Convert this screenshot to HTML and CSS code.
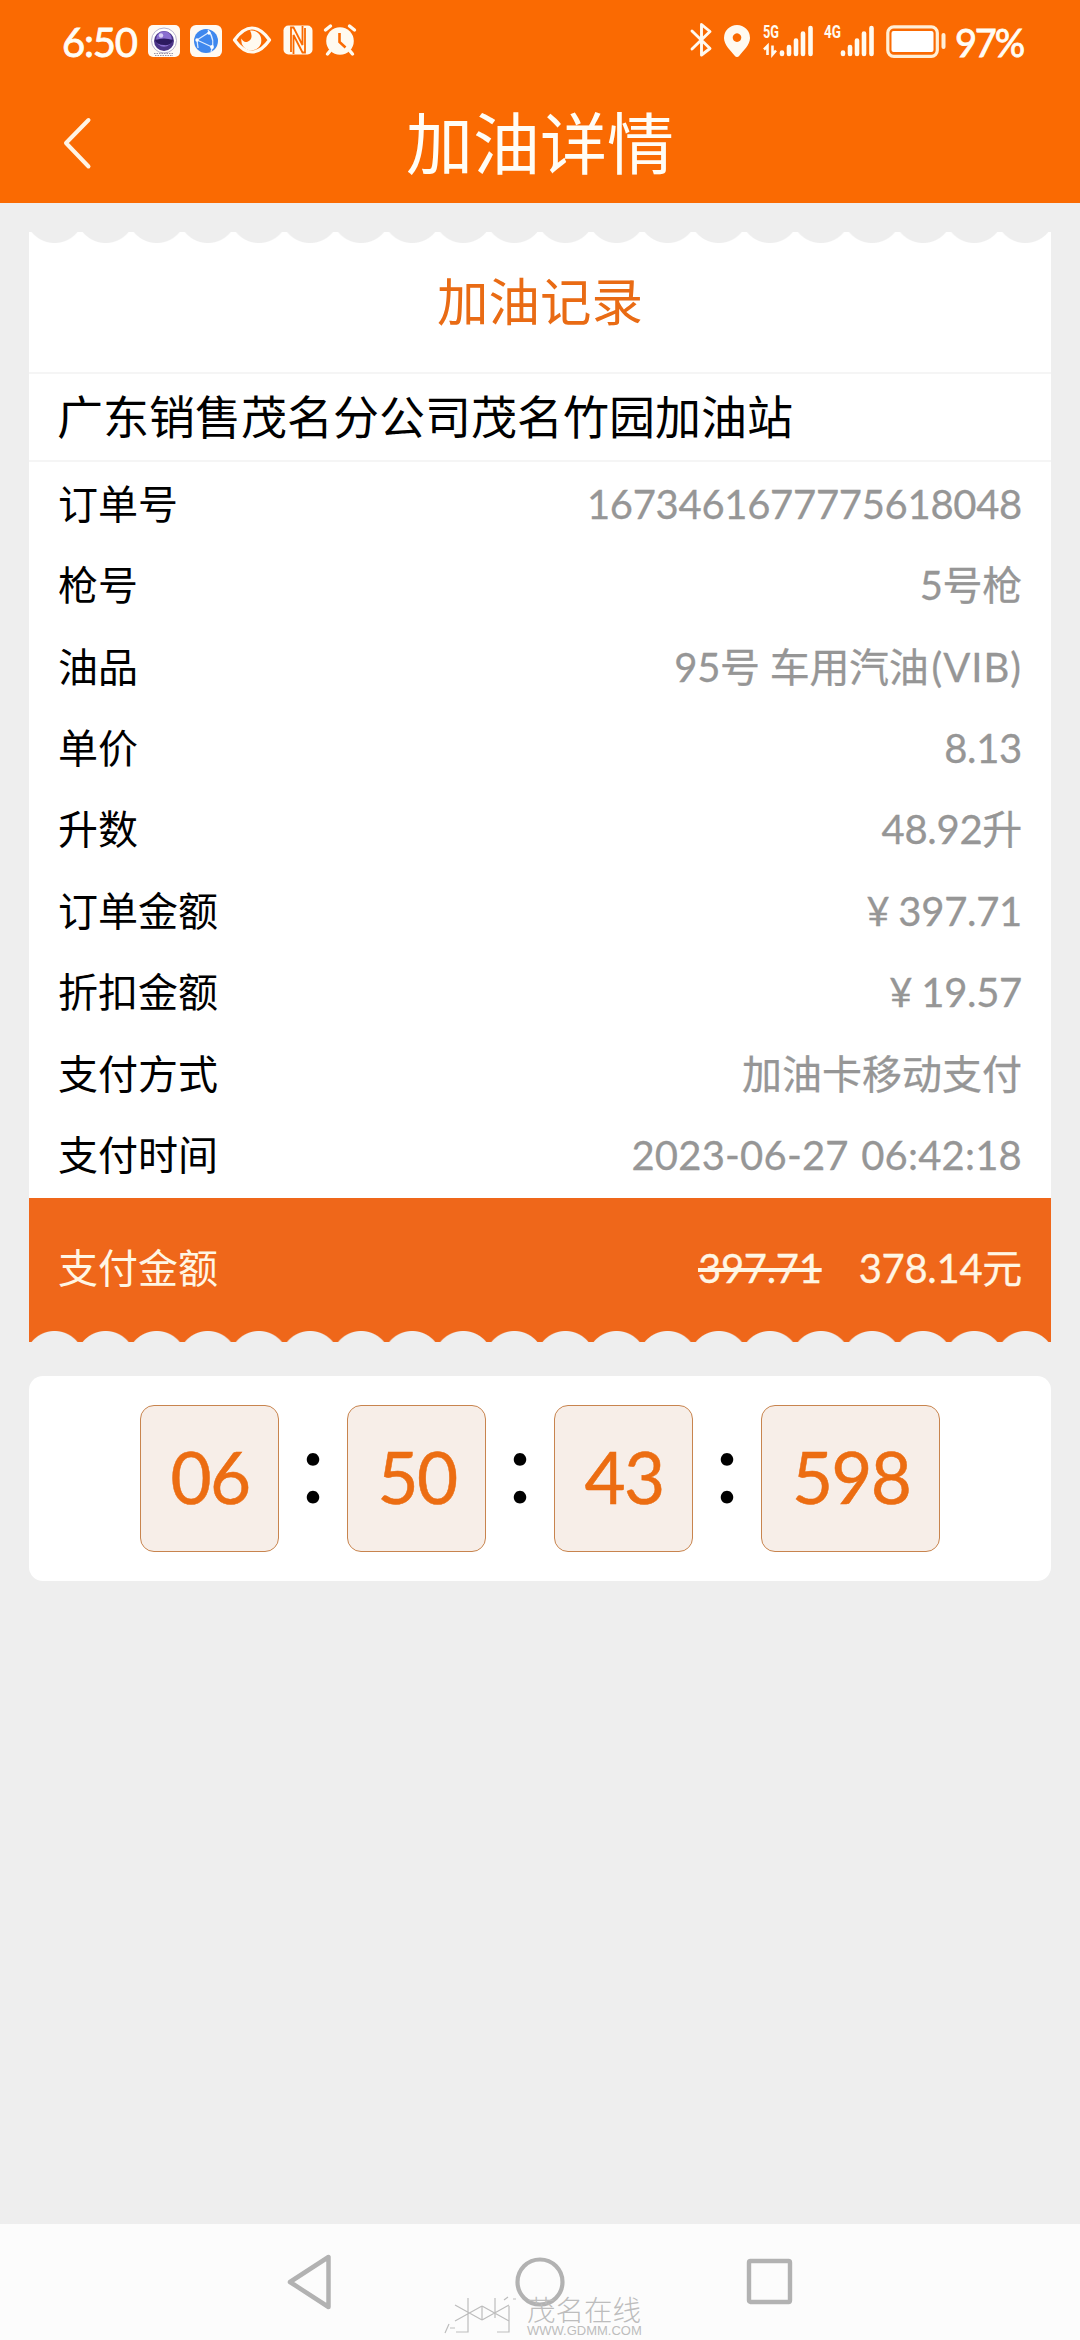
FILE: index.html
```
<!DOCTYPE html>
<html lang="zh-CN">
<head>
<meta charset="utf-8">
<title>加油详情</title>
<link rel="stylesheet" href="styles.css">
</head>
<body>
<header class="top">
  <div class="status">
    <div class="status-left">
      <span class="clock">6:50</span>
      <svg class="ic-cam" width="32" height="32" viewBox="0 0 32 32"><rect width="32" height="32" rx="5" fill="#fffaf4"/><circle cx="16" cy="15.500" r="12.500" fill="#fff" stroke="#b9b2cc"/><path d="M6 28.500h20M7 30.500h18" stroke="#9a94a8" stroke-dasharray="1.500 1"/><circle cx="16" cy="16" r="10" fill="#4b3486"/><circle cx="16" cy="14" r="7.800" fill="#8a6fd0"/><path d="M7 15q9-3 18 0q-2 6-9 5q-7 0-9-5" fill="#2c1a60"/><circle cx="13" cy="10.500" r="2.200" fill="#d9cff5"/></svg>
      <svg class="ic-net" width="32" height="32" viewBox="0 0 32 32"><rect width="32" height="32" rx="6" fill="#fffaf2"/><circle cx="16" cy="16" r="12" fill="#3f88ee"/><path d="M7 15L18 8M7 15l15 7M18 5q8 10 3 22M8 23L7 15" fill="none" stroke="#dcebff" stroke-width="1.300"/><g fill="#fff"><circle cx="7" cy="15" r="1.700"/><circle cx="19" cy="8" r="1.700"/><circle cx="22" cy="22" r="1.900"/></g></svg>
      <svg class="ic-eye" width="40" height="30" viewBox="0 0 40 30"><path d="M2.500 15Q11 3 20 3t17.500 12Q29 27 20 27T2.500 15z" fill="none" stroke="#fffaf0" stroke-width="3.200" stroke-linejoin="round"/><path d="M18 5.500a10 10 0 1 1-8.500 8q2 4.500 6 3.200q4.500-1.700 4-6.200q-.3-3-1.500-5z" fill="#fffaf0"/></svg>
      <svg class="ic-nfc" width="30" height="30" viewBox="0 0 30 30"><rect x=".5" y=".5" width="29" height="29" rx="5" fill="#fffaf0"/><path d="M8 27V2.500H10.500L19.500 20V1M22 3V27.500H19.500L10.500 10V29" fill="none" stroke="#fa6a02" stroke-width="1.800"/></svg>
      <svg class="ic-alarm" width="34" height="32" viewBox="0 0 34 32"><circle cx="17" cy="17" r="13.800" fill="#fffaf0"/><path d="M2.500 6l5-4M31.500 6l-5-4M7 27l-2.500 3M27 27l2.500 3" stroke="#fffaf0" stroke-width="3.400" stroke-linecap="round"/><path d="M16.500 9v9l6 5.500" fill="none" stroke="#fa6a02" stroke-width="2.600"/></svg>
    </div>
    <div class="status-right">
      <svg class="ic-bt" width="22" height="36" viewBox="0 0 22 36"><path d="M2 9l18 17.500-8.500 6.500V2.500L20 9.500 2 27" fill="none" stroke="#fffaf0" stroke-width="2.900" stroke-linejoin="round" stroke-linecap="round"/></svg>
      <svg class="ic-pin" width="26" height="32" viewBox="0 0 26 32"><path fill-rule="evenodd" d="M13 0a13 13 0 0 1 13 13c0 7-7 13-10.500 17.500q-2.500 3-5 0C7 26 0 20 0 13A13 13 0 0 1 13 0zm0 8.300a4.300 4.300 0 1 0 .01 0z" fill="#fffaf0"/></svg>
      <svg class="ic-sig" width="50" height="33" viewBox="0 0 50 33"><text x="0" y="14" class="net" textLength="16" lengthAdjust="spacingAndGlyphs">5G</text><path d="M4.500 31V22L1 25.500M9.500 21.500v9l3.500-4" fill="none" stroke="#fffaf0" stroke-width="2.600"/><path d="M19 28.500V30M26 23v7M33 16.500V30M40 9.500V30M47.500 4v26" stroke="#fffaf0" stroke-width="4.600" stroke-linecap="round"/></svg>
      <svg class="ic-sig2" width="50" height="33" viewBox="0 0 50 33"><text x="0" y="14" class="net" textLength="17" lengthAdjust="spacingAndGlyphs">4G</text><path d="M19 28.500V30M26 23v7M33 16.500V30M40 9.500V30M47.500 4v26" stroke="#fffaf0" stroke-width="4.600" stroke-linecap="round"/></svg>
      <svg class="ic-bat" width="60" height="33" viewBox="0 0 60 33"><rect x="1.800" y="1.800" width="49.500" height="29.500" rx="6" fill="none" stroke="#ffefd6" stroke-width="3.200"/><rect x="5.500" y="6" width="42" height="21" rx="2" fill="#fff"/><path d="M57.500 10v12" stroke="#ffefd6" stroke-width="4" stroke-linecap="round"/></svg>
      <span class="pct">97%</span>
    </div>
  </div>
  <div class="nav">
    <svg class="back" width="28" height="52" viewBox="0 0 28 52"><path d="M25.500 3L3 26l22.500 23.500" fill="none" stroke="#fff4e4" stroke-width="4" stroke-linecap="round" stroke-linejoin="round"/></svg>
    <h1 class="title">加油详情</h1>
  </div>
</header>
<main class="main">
  <section class="ticket">
    <div class="scallop scallop-top"></div>
    <h2 class="record">加油记录</h2>
    <div class="station">广东销售茂名分公司茂名竹园加油站</div>
    <dl class="rows">
      <div class="row"><dt>订单号</dt><dd>1673461677775618048</dd></div>
      <div class="row"><dt>枪号</dt><dd>5号枪</dd></div>
      <div class="row"><dt>油品</dt><dd>95号 车用汽油<span class="grade">(VIB)</span></dd></div>
      <div class="row"><dt>单价</dt><dd>8.13</dd></div>
      <div class="row"><dt>升数</dt><dd>48.92升</dd></div>
      <div class="row"><dt>订单金额</dt><dd><span class="yen">¥</span>397.71</dd></div>
      <div class="row"><dt>折扣金额</dt><dd><span class="yen">¥</span>19.57</dd></div>
      <div class="row"><dt>支付方式</dt><dd class="plain">加油卡移动支付</dd></div>
      <div class="row"><dt>支付时间</dt><dd class="time">2023-06-27 06:42:18</dd></div>
    </dl>
    <div class="pay">
      <span>支付金额</span>
      <span class="amounts"><s class="old">397.71</s><span>378.14元</span></span>
    </div>
    <div class="scallop scallop-bottom"></div>
  </section>
  <section class="timer">
    <span class="box">06</span><span class="colon">:</span>
    <span class="box">50</span><span class="colon">:</span>
    <span class="box">43</span><span class="colon">:</span>
    <span class="box wide">598</span>
  </section>
</main>
<footer class="sysnav">
  <svg class="key" width="48" height="60" viewBox="0 0 48 60"><path d="M42.500 5v50L4 30z" fill="none" stroke="#b2b2b2" stroke-width="4.500" stroke-linejoin="round"/></svg>
  <svg class="key" width="50" height="60" viewBox="0 0 50 60"><circle cx="25" cy="30" r="22.500" fill="none" stroke="#b2b2b2" stroke-width="4.200"/></svg>
  <svg class="key" width="48" height="60" viewBox="0 0 48 60"><rect x="3" y="9" width="41" height="41" rx="1.500" fill="none" stroke="#b2b2b2" stroke-width="4.400"/></svg>
  <div class="mark">
    <svg class="mark-logo" width="72" height="42" viewBox="0 0 72 42"><path d="M12 9l27 15M39 10L12 25M39 10v14M39 10l27 15M66 9L39 24M25 2v34H13M66 10v26H54M52 2v20M61 4l4-3M70 3h3M2 37l4-9M7 32h5" fill="none" stroke="#bdbdbd" stroke-width="1.200"/></svg>
    <div class="mark-text"><span class="mark-cn">茂名在线</span><span class="mark-url">WWW.GDMM.COM</span></div>
  </div>
</footer>
</body>
</html>
```
FILE: styles.css
```
* { box-sizing: border-box; margin: 0; padding: 0; }
body {
  width: 1080px; height: 2340px; overflow: hidden;
  display: flex; flex-direction: column;
  background: #eee; color: #000;
  font-family: Lato, "Noto Sans CJK SC", sans-serif;
  font-kerning: none;
}
svg { display: block; flex: none; overflow: visible; }
.top { height: 203px; background: #fa6a02; color: #fffdf6; }
.status { height: 84px; display: flex; justify-content: space-between; padding: 0 53px 0 62px; }
.status-left, .status-right { display: flex; align-items: flex-start; }
.clock { font-size: 40px; line-height: 48px; width: 86px; padding-top: 18px; letter-spacing: -1.200px; white-space: nowrap; -webkit-text-stroke: .8px; }
.pct { font-size: 38px; line-height: 48px; width: 72px; padding-top: 18px; letter-spacing: -2.200px; white-space: nowrap; -webkit-text-stroke: .8px; }
.ic-cam { margin-top: 25px; }
.ic-net { margin: 25px 0 0 10px; }
.ic-eye { margin: 25px 0 0 10px; }
.ic-nfc { margin: 25px 0 0 11px; }
.ic-alarm { margin: 24px 0 0 10px; }
.ic-bt { margin-top: 22px; }
.ic-pin { margin: 25px 0 0 12px; }
.ic-sig { margin: 24px 0 0 13px; }
.ic-sig2 { margin: 24px 0 0 11px; }
.ic-bat { margin: 25px 9px 0 12px; }
.net { font: 700 19px Roboto, sans-serif; fill: #fffaf0; }
.nav { height: 119px; display: grid; grid-template-columns: 202px 1fr 202px; align-items: center; }
.back { margin-left: 63px; margin-top: -1px; }
.title { text-align: center; font-size: 67px; line-height: 90px; font-weight: 400; margin-top: -2px; }
.main { flex: 1; padding: 29px 29px 0; }
.ticket { background: #fff; }
.scallop { height: 11px; background-size: 51.100px 11px; }
.scallop-top { background-image: radial-gradient(circle at 50% -18.500px, #eee 29px, #fff 30px); }
.scallop-bottom { background-image: radial-gradient(circle at 50% 29.500px, #eee 29px, #ef671a 30px); }
.record { height: 131px; line-height: 116px; text-align: center; font-size: 51.500px; font-weight: 400; color: #e96b14; border-bottom: 2px solid #f5f5f5; }
.station { height: 88px; line-height: 86px; padding-left: 28px; font-size: 46px; border-bottom: 2px solid #f5f5f5; }
.rows { height: 736px; padding: 2px 0 1px; display: flex; flex-direction: column; }
.row { flex: 1; display: flex; justify-content: space-between; align-items: center; padding: 0 29px; font-size: 40px; line-height: 60px; }
.row dt, .row dd { margin-top: -2px; }
.row dd { color: #969696; letter-spacing: -.3px; -webkit-text-stroke: .3px; }
.row .plain { letter-spacing: 0; }
.grade { letter-spacing: 1px; margin-left: 3px; }
.row .time { letter-spacing: .2px; word-spacing: 2px; }
.yen { margin-right: 9px; }
.pay { height: 133px; background: #ef671a; color: #fff6e4; display: flex; justify-content: space-between; align-items: center; padding: 6px 29px 0; font-size: 40px; line-height: 60px; }
.amounts { display: flex; gap: 37px; letter-spacing: -.3px; -webkit-text-stroke: .3px; }
.timer { margin-top: 34px; height: 205px; border-radius: 14px; background: #fff; display: flex; align-items: center; justify-content: center; }
.box { width: 139px; height: 147px; border: 1px solid #c8844e; border-radius: 14px; background: #f7eee8; color: #ec6d12; font-size: 71px; line-height: 141px; text-align: center; letter-spacing: -1.800px; text-indent: 1px; -webkit-text-stroke: .5px; }
.wide { width: 179px; }
.colon { width: 68px; height: 147px; text-align: center; font-size: 100px; line-height: 119px; }
.sysnav { height: 116px; background: #fcfcfc; position: relative; display: flex; justify-content: space-between; padding: 28px 286px 0 286px; }
.mark { position: absolute; left: 443px; top: 72px; display: flex; gap: 12px; color: #bdbdbd; }
.mark-text { display: flex; flex-direction: column; }
.mark-cn { font-size: 28.500px; line-height: 28px; font-weight: 300; }
.mark-url { font: 13px/14px "Liberation Sans", sans-serif; }
```
